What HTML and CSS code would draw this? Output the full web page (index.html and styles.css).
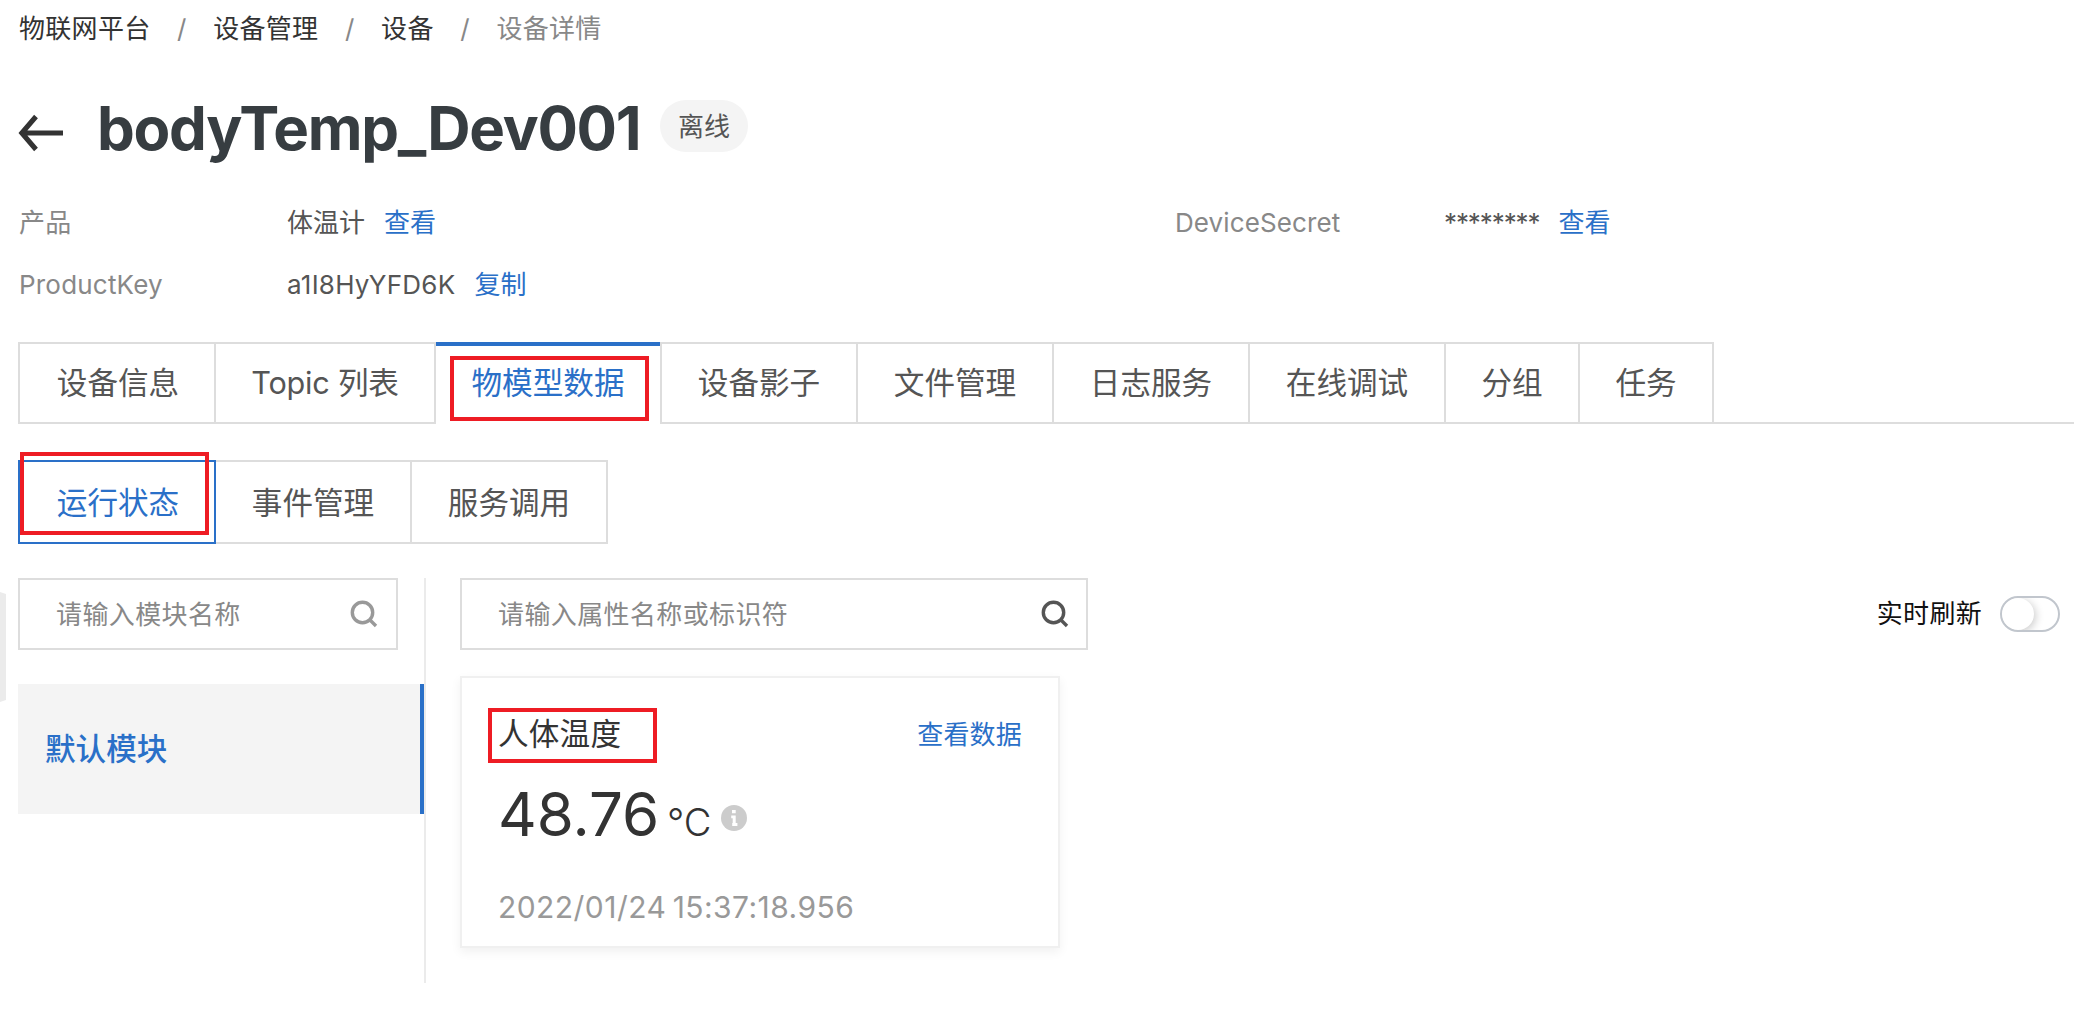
FILE: index.html
```html
<!DOCTYPE html>
<html lang="zh-CN">
<head>
<meta charset="utf-8">
<title>设备详情</title>
<link rel="stylesheet" href="styles.css">
</head>
<body>
<div class="handle"></div>
<nav class="crumbs">
  <a>物联网平台</a><i>/</i><a>设备管理</a><i>/</i><a>设备</a><i>/</i><span>设备详情</span>
</nav>
<header class="head">
  <svg class="back" viewBox="0 0 46 38" width="46" height="38"><path d="M18 2.500 3.800 19 18 35.500M4.500 19h40.500" fill="none" stroke="#333" stroke-width="5"/></svg>
  <h1 class="title">bodyTemp_Dev001</h1>
  <span class="badge">离线</span>
</header>
<dl class="info">
  <dt>产品</dt><dd>体温计<a>查看</a></dd>
  <dt class="secret">DeviceSecret</dt><dd><span class="stars">********</span><a>查看</a></dd>
  <dt>ProductKey</dt><dd><span class="key">a1I8HyYFD6K</span><a>复制</a></dd>
</dl>
<div class="tabs">
  <div class="tab first">设备信息</div>
  <div class="tab topic">Topic 列表</div>
  <div class="tab active">物模型数据<div class="mark mark-tab"></div></div>
  <div class="tab">设备影子</div>
  <div class="tab">文件管理</div>
  <div class="tab">日志服务</div>
  <div class="tab">在线调试</div>
  <div class="tab short">分组</div>
  <div class="tab short">任务</div>
</div>
<div class="subtabs">
  <div class="subtab on">运行状态<div class="mark mark-sub"></div></div>
  <div class="subtab">事件管理</div>
  <div class="subtab">服务调用</div>
</div>
<main class="main">
  <aside class="side">
    <div class="search">
      <span>请输入模块名称</span>
      <svg class="glass" viewBox="0 0 28 28" width="28" height="28"><circle cx="12.500" cy="12.500" r="10.200"/><path d="m19.500 19.500 6.500 6.500"/></svg>
    </div>
    <div class="module">默认模块</div>
  </aside>
  <section class="content">
    <div class="toolbar">
      <div class="search wide">
        <span>请输入属性名称或标识符</span>
        <svg class="glass dark" viewBox="0 0 28 28" width="28" height="28"><circle cx="12.500" cy="12.500" r="10.200"/><path d="m19.500 19.500 6.500 6.500"/></svg>
      </div>
      <div class="refresh">实时刷新<span class="switch"><span class="knob"></span></span></div>
    </div>
    <article class="card">
      <div class="card-head">
        <span class="name">人体温度</span><a>查看数据</a>
        <div class="mark mark-name"></div>
      </div>
      <div class="reading">
        <span class="value">48.76</span><span class="unit">°C</span>
        <svg class="tip" viewBox="0 0 26 26" width="26" height="26"><circle cx="13" cy="13" r="13" fill="#ccc"/><path d="M11 5h3.700v3.300H11zM10.200 10.500h4.500v7.500h1.700v3h-5.200v-3h.500v-4.800h-1.500z" fill="#fff"/></svg>
      </div>
      <div class="time">2022/01/24 15:37:18.956</div>
    </article>
  </section>
</main>
</body>
</html>
```

FILE: styles.css
```css
* { box-sizing: border-box; }
body {
  margin: 0;
  padding-left: 18px;
  position: relative;
  height: 1012px;
  overflow: hidden;
  background: #fff;
  color: #555;
  font: 26px/36px Inter, "Noto Sans CJK SC", sans-serif;
  white-space: nowrap;
}
a { color: #2a70c8; }
.handle {
  position: absolute;
  left: 0;
  top: 592px;
  width: 6px;
  height: 110px;
  background: #ebebeb;
  clip-path: polygon(0 0, 100% 2px, 100% 108px, 0 100%);
}
.crumbs {
  display: flex;
  align-items: center;
  height: 56px;
  padding: 2px 0 0 1px;
  letter-spacing: 0.3px;
  color: #888;
}
.crumbs a { color: #333; }
.crumbs i {
  width: 62.700px;
  text-align: center;
  font-style: normal;
}
.head {
  display: flex;
  align-items: center;
  height: 74px;
  margin-top: 36px;
}
.back { margin-top: 8px; }
.title {
  margin: -2px 0 0 33px;
  width: 563px;
  font-size: 60px;
  line-height: 74px;
  font-weight: 700;
  letter-spacing: -1.250px;
  color: #373d41;
}
.badge {
  width: 88px;
  height: 52px;
  margin-top: -6px;
  border-radius: 26px;
  background: #f4f4f4;
  line-height: 54px;
  text-align: center;
}
.info {
  display: grid;
  grid-template-columns: 268px 888px 269px 1fr;
  grid-auto-rows: 62px;
  align-items: center;
  margin: 26px 0 26px;
  padding-left: 1px;
}
.info dt { color: #888; letter-spacing: 0.2px; }
.info dt.secret { letter-spacing: 0.1px; }
.info dd { margin: 0; }
.info a { margin-left: 19px; }
.key { letter-spacing: 0.240px; }
.stars { letter-spacing: -1.100px; }
.tabs {
  display: flex;
  height: 82px;
  font-size: 30.600px;
  line-height: 78px;
  text-align: center;
  background: linear-gradient(#ddd, #ddd) 0 100% / 100% 2px no-repeat;
}
.tab {
  width: 196px;
  border: solid #ddd;
  border-width: 2px 2px 2px 0;
}
.tab.first { width: 198px; border-left-width: 2px; padding-left: 2px; }
.tab.topic { width: 220px; letter-spacing: -0.200px; }
.tab.active {
  position: relative;
  width: 226px;
  color: #2a70c8;
  background: linear-gradient(#2a70c8, #2a70c8) 0 0 / 224px 4px no-repeat, #fff;
  border-top: 0;
  border-bottom: 0;
  padding-top: 2px;
}
.tab.short { width: 134px; }
.mark {
  position: absolute;
  border: 4px solid #ee1c24;
}
.mark-tab { left: 14px; top: 14px; width: 199px; height: 65px; }
.subtabs {
  display: flex;
  margin-top: 36px;
  height: 84px;
  font-size: 30.600px;
  line-height: 82px;
  text-align: center;
}
.subtab {
  width: 196px;
  border: solid #ddd;
  border-width: 2px 2px 2px 0;
}
.subtab.on {
  position: relative;
  width: 198px;
  padding-left: 2px;
  border: 2px solid #2a70c8;
  color: #2a70c8;
}
.mark-sub { left: 0; top: -10px; width: 189px; height: 83px; }
.main {
  display: flex;
  margin-top: 34px;
  height: 405px;
}
.side {
  width: 408px;
  border-right: 2px solid #ebebeb;
}
.search {
  display: flex;
  align-items: center;
  justify-content: space-between;
  width: 380px;
  height: 72px;
  padding: 0 17px 0 36px;
  border: 2px solid #ddd;
  letter-spacing: 0.380px;
  color: #888;
}
.side .search { padding-right: 18px; }
.search span { padding-top: 2px; }
.glass { fill: none; stroke: #999; stroke-width: 3.400; }
.glass.dark { stroke: #555; }
.module {
  height: 130px;
  margin-top: 34px;
  padding-left: 27px;
  border-right: 4px solid #2a70c8;
  background: #f4f4f4;
  color: #2a70c8;
  font-size: 30.600px;
  font-weight: 500;
  line-height: 130px;
}
.content { flex: 1; padding: 0 14px 0 34px; }
.toolbar { display: flex; justify-content: space-between; align-items: center; }
.search.wide { width: 628px; }
.refresh { display: flex; align-items: center; letter-spacing: 0.300px; color: #111; }
.switch {
  width: 60px;
  height: 36px;
  margin-left: 18px;
  border: 2px solid #c1c6cd;
  border-radius: 18px;
  overflow: hidden;
}
.knob {
  display: block;
  width: 32px;
  height: 32px;
  border-radius: 50%;
  background: #fff;
  box-shadow: 2px 2px 8px rgba(0, 0, 0, 0.2);
}
.card {
  width: 600px;
  height: 272px;
  margin-top: 26px;
  padding: 31px 36px 0 36px;
  border: 2px solid #f0f0f0;
  box-shadow: 0 4px 10px rgba(0, 0, 0, 0.06);
}
.card-head {
  position: relative;
  display: flex;
  justify-content: space-between;
  align-items: center;
  height: 50px;
}
.card-head a { padding-top: 2px; letter-spacing: 0.200px; }
.name { font-size: 30.600px; letter-spacing: 0.200px; color: #333; }
.mark-name { left: -10px; top: -1px; width: 169px; height: 55px; }
.reading {
  display: flex;
  align-items: baseline;
  height: 74px;
  margin-top: 18px;
  line-height: 74px;
  color: #333;
}
.value { width: 169px; font-size: 60px; }
.unit { width: 54px; font-size: 38px; font-weight: 300; }
.tip { align-self: center; margin-top: 8px; }
.time {
  margin-top: 36px;
  font-size: 30px;
  line-height: 40px;
  letter-spacing: 0.450px;
  word-spacing: -2.500px;
  color: #999;
}
```
